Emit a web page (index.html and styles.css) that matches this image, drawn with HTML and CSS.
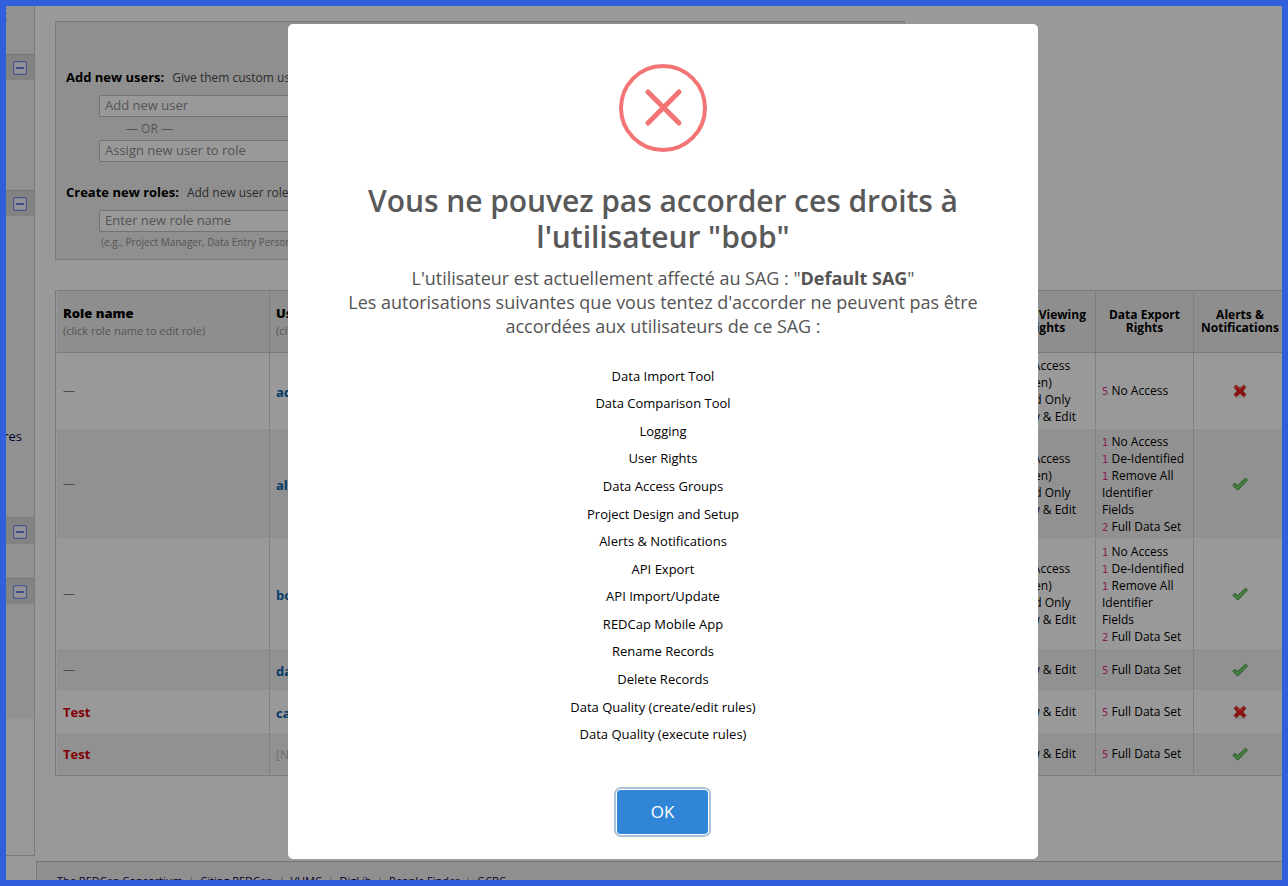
FILE: index.html
```html
<!DOCTYPE html>
<html lang="fr">
<head>
<meta charset="utf-8">
<title>User Rights</title>
<link rel="stylesheet" href="styles.css">
</head>
<body>
<svg width="0" height="0" class="defs">
  <symbol id="tick" viewBox="0 0 16 16"><path d="M.8 9.2 3 7.2l2.7 2.4L13.5 2l2 2.1L6.2 13.8 5 13.6Z" fill="#3f7f3a" stroke="#28562a" stroke-width=".9"/><path d="M2.2 9l3.3 2.5L13.7 3.6" fill="none" stroke="#4d8548" stroke-width=".9"/></symbol>
  <symbol id="cross" viewBox="0 0 16 16"><path d="M3 14.3h11" stroke="#858585" stroke-width="1.2"/><path d="M2 4.2 4.2 2 8 5.3 11.8 2 14 4.2 10.8 8l3.2 3.6-2.2 2.2L8 10.5l-3.8 3.3L2 11.6 5.2 8Z" fill="#8c1212" stroke="#701010" stroke-width=".7"/><path d="M3 4.3l1.3-1.2L8 6.5l3.7-3.4L13 4.3" fill="none" stroke="#a03c3c" stroke-width="1"/></symbol>
  <symbol id="fold" viewBox="0 0 14 14"><rect x=".6" y=".6" width="12.8" height="12.8" rx="2" fill="#929298" stroke="#4d5789" stroke-width="1.1"/><path d="M3 7h8" stroke="#3e4b83" stroke-width="2"/></symbol>
</svg>
<div class="frame">
  <aside class="sidebar">
    <div class="menu m1"><span>t</span></div>
    <div class="bar"><svg><use href="#fold"/></svg></div>
    <div class="menu m2"></div>
    <div class="bar"><svg><use href="#fold"/></svg></div>
    <div class="menu m3"><span>res</span></div>
    <div class="bar tall"><svg><use href="#fold"/></svg></div>
    <div class="menu m4"></div>
    <div class="bar"><svg><use href="#fold"/></svg></div>
    <div class="menu m5"></div>
  </aside>
  <main class="main">
    <section class="panel">
      <p class="lead"><b>Add new users:</b><span>Give them custom user rights</span></p>
      <div class="field">Add new user</div>
      <p class="or">— OR —</p>
      <div class="field">Assign new user to role</div>
      <p class="lead second"><b>Create new roles:</b><span>Add new user roles</span></p>
      <div class="field">Enter new role name</div>
      <p class="hint">(e.g., Project Manager, Data Entry Person)</p>
    </section>
    <section class="table">
      <div class="row head">
        <div class="cell left"><b>Role name</b><small>(click role name to edit role)</small></div>
        <div class="cell left"><b>Username</b><small>(click username)</small></div>
        <div class="cell">Data Viewing<br>Rights</div><div class="cell">Data Export<br>Rights</div><div class="cell">Alerts &amp;<br>Notifications</div>
      </div>
      <div class="row r1">
        <div class="cell dash">—</div><div class="cell user">admin</div>
        <div class="cell"><div><i>1</i> No Access<br>(Hidden)<br><i>1</i> Read Only<br><i>3</i> View &amp; Edit</div></div>
        <div class="cell single"><div><i>5</i> No Access</div></div><div class="cell icon"><svg><use href="#cross"/></svg></div>
      </div>
      <div class="row r2 alt">
        <div class="cell dash">—</div><div class="cell user">alice</div>
        <div class="cell"><div><i>1</i> No Access<br>(Hidden)<br><i>1</i> Read Only<br><i>3</i> View &amp; Edit</div></div>
        <div class="cell"><div><i>1</i> No Access<br><i>1</i> De-Identified<br><i>1</i> Remove All<br>Identifier<br>Fields<br><i>2</i> Full Data Set</div></div><div class="cell icon"><svg><use href="#tick"/></svg></div>
      </div>
      <div class="row r2">
        <div class="cell dash">—</div><div class="cell user">bob</div>
        <div class="cell"><div><i>1</i> No Access<br>(Hidden)<br><i>1</i> Read Only<br><i>3</i> View &amp; Edit</div></div>
        <div class="cell"><div><i>1</i> No Access<br><i>1</i> De-Identified<br><i>1</i> Remove All<br>Identifier<br>Fields<br><i>2</i> Full Data Set</div></div><div class="cell icon"><svg><use href="#tick"/></svg></div>
      </div>
      <div class="row r4 alt">
        <div class="cell dash">—</div><div class="cell user">daniel</div>
        <div class="cell single"><div><i>5</i> View &amp; Edit</div></div><div class="cell single"><div><i>5</i> Full Data Set</div></div><div class="cell icon"><svg><use href="#tick"/></svg></div>
      </div>
      <div class="row r4">
        <div class="cell role">Test</div><div class="cell user">carol</div>
        <div class="cell single"><div><i>5</i> View &amp; Edit</div></div><div class="cell single"><div><i>5</i> Full Data Set</div></div><div class="cell icon"><svg><use href="#cross"/></svg></div>
      </div>
      <div class="row r4 alt">
        <div class="cell role">Test</div><div class="cell none">[No users]</div>
        <div class="cell single"><div><i>5</i> View &amp; Edit</div></div><div class="cell single"><div><i>5</i> Full Data Set</div></div><div class="cell icon"><svg><use href="#tick"/></svg></div>
      </div>
    </section>
    <footer class="footer"><span>The REDCap Consortium</span><em>|</em><span>Citing REDCap</span><em>|</em><span>VUMC</span><em>|</em><span>DigLib</span><em>|</em><span>People Finder</span><em>|</em><span>GCRC</span></footer>
  </main>
  <div class="modal">
    <svg class="error" viewBox="0 0 88 88"><circle cx="44" cy="44" r="42" fill="none" stroke="#f27474" stroke-width="4"/><path d="M29 28 60 59M60 28 29 59" stroke="#f27474" stroke-width="5" stroke-linecap="round"/></svg>
    <h2>Vous ne pouvez pas accorder ces droits à<br>l'utilisateur "bob"</h2>
    <p class="text">L'utilisateur est actuellement affecté au SAG : "<b>Default SAG</b>"<br>Les autorisations suivantes que vous tentez d'accorder ne peuvent pas être<br>accordées aux utilisateurs de ce SAG :</p>
    <ul>
      <li>Data Import Tool</li><li>Data Comparison Tool</li><li>Logging</li><li>User Rights</li><li>Data Access Groups</li><li>Project Design and Setup</li><li>Alerts &amp; Notifications</li><li>API Export</li><li>API Import/Update</li><li>REDCap Mobile App</li><li>Rename Records</li><li>Delete Records</li><li>Data Quality (create/edit rules)</li><li>Data Quality (execute rules)</li>
    </ul>
    <button>OK</button>
  </div>
</div>
</body>
</html>
```
FILE: styles.css
```css
* { box-sizing: border-box; margin: 0; padding: 0; }
body { font-family: "Open Sans", sans-serif; font-size: 13px; color: #000; overflow: hidden; }
.defs { display: block; width: 0; height: 0; position: absolute; }
.frame { position: relative; display: flex; width: 1288px; height: 886px; border: 6px solid #2f5fdc; background: #999; overflow: hidden; }

.sidebar { flex: none; width: 29px; height: 850px; border-right: 1px solid #7b7b7b; border-bottom: 1px solid #7b7b7b; overflow: hidden; }
.menu { display: flex; background: #919191; color: #00002e; line-height: 18px; justify-content: flex-end; overflow: hidden; }
.m1 { height: 48px; } .m1 span { margin-right: 27px; color: #173342; }
.m2 { height: 110px; }
.m3 { height: 301px; padding: 211px 12px 0 0; }
.m4 { height: 34px; }
.m5 { height: 114px; }
.bar { height: 26px; background: #838383; border-top: 1px solid #777; padding: 6px 0 0 7px; }
.bar.tall { height: 27px; padding-top: 7px; }
.bar svg { display: block; width: 14px; height: 14px; }

.main { flex: none; width: 1247px; padding: 15px 0 0 1px; }
.panel { width: 850px; height: 239px; margin-left: 19px; border: 1px solid #7b7b7b; background: #8f8f8f; padding: 46px 0 0 10px; white-space: nowrap; }
.lead { height: 18px; line-height: 18px; margin-bottom: 9px; font-size: 12px; color: #2b2b2b; }
.lead b { font-size: 13px; color: #000; margin-right: 8px; }
.lead.second { margin-top: 21px; }
.field { width: 260px; height: 22px; margin-left: 33px; padding-left: 5px; border: 1px solid #737373; border-radius: 2px; background: #999; color: #545454; line-height: 19px; }
.or { height: 23px; line-height: 23px; margin-left: 60px; font-size: 12px; color: #545454; }
.hint { margin: 3px 0 0 35px; font-size: 10px; line-height: 14px; color: #545454; }

.table { width: 1260px; height: 486px; margin: 30px 0 0 19px; border: 1px solid #7b7b7b; }
.row { display: grid; grid-template-columns: 213px 728px 98px 98px 94px; background: #999; border-left: 1px solid #999; border-bottom: 1px solid #999; }
.alt { background: #919191; border-bottom-color: #979797; }
.head { height: 62px; background: #8e8e8e; border-bottom: 1px solid #7b7b7b; }
.r1 { height: 76px; }
.r2 { height: 110px; }
.r4 { height: 42px; }
.cell { display: flex; flex-direction: column; justify-content: center; border-right: 1px solid #7f7f7f; padding: 1px 0 0 6px; font-size: 12px; line-height: 17px; white-space: nowrap; overflow: hidden; }
.cell:last-child { border-right: 0; }
.cell i { font: 10px/1 "DejaVu Sans", sans-serif; color: #8b1a52; }
.cell.single { padding-top: 0; padding-bottom: 1px; }
.head .cell { padding: 0 0 1px; text-align: center; font-weight: 700; line-height: 13px; }
.head .cell:last-child { padding-right: 2px; }
.head .cell.left { padding: 0 0 0 6px; text-align: left; line-height: 18px; font-size: 13px; }
.cell small { font-size: 11px; font-weight: 400; color: #545454; line-height: 17px; }
.cell.dash { color: #4d4d4d; padding-top: 0; }
.cell.user { color: #063b69; font-weight: 700; font-size: 13px; padding-top: 3px; }
.role { color: #830006; font-weight: 700; font-size: 13px; }
.none { color: #6d6d6d; }
.cell.icon { align-items: center; padding: 1px 2px 0 0; }
.icon svg { width: 16px; height: 16px; }

.footer { height: 40px; margin-top: 85px; padding: 11px 0 0 20px; border-top: 1px solid #737373; border-left: 1px solid #7b7b7b; background: #8f8f8f; display: flex; font-size: 11px; line-height: 16px; color: #00002e; }
.footer em { width: 17.6px; text-align: center; font-style: normal; color: #555; }

.modal { position: absolute; left: 282px; top: 18px; width: 750px; height: 835px; border-radius: 5px; background: #fff; padding-top: 40px; display: flex; flex-direction: column; align-items: center; text-align: center; white-space: nowrap; }
.error { flex: none; width: 88px; height: 88px; }
h2 { margin-top: 31px; font-size: 30px; line-height: 36px; font-weight: 600; letter-spacing: -.06px; color: #595959; }
.text { margin-top: 11px; font-size: 18px; line-height: 24px; letter-spacing: -.02px; color: #545454; }
ul { list-style: none; margin-top: 24.8px; }
li { height: 27.57px; line-height: 27.57px; font-size: 13px; }
button { width: 91px; height: 44px; margin: 41.2px 1px 0 0; border: 0; border-radius: 4px; background: #3085d6; color: #fff; font: 17px "Open Sans", sans-serif; box-shadow: 0 0 0 1px #fff, 0 0 0 3px #abc2d8; }
```
